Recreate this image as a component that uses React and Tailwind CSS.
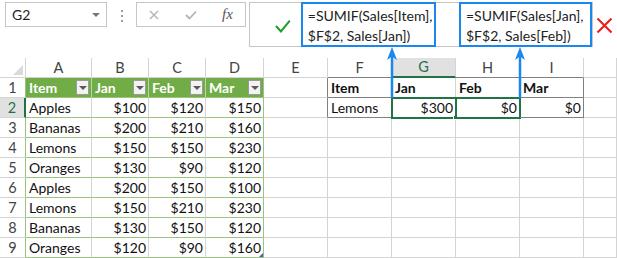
import React from "react";

const COLS = ["A", "B", "C", "D", "E", "F", "G", "H", "I", ""];

const DATA = [
  ["Apples", 100, 120, 150],
  ["Bananas", 200, 210, 160],
  ["Lemons", 150, 150, 230],
  ["Oranges", 130, 90, 120],
  ["Apples", 200, 150, 100],
  ["Lemons", 150, 210, 230],
  ["Bananas", 130, 150, 120],
  ["Oranges", 120, 90, 160],
];

const RIGHT = [
  ["Item", "Jan", "Feb", "Mar"],
  ["Lemons", "$300", "$0", "$0"],
];

function Arrow({ className }) {
  return (
    <svg className={className} width="12" height="51" viewBox="0 0 12 51">
      <line x1="6" y1="8" x2="6" y2="51" stroke="#1a86f0" strokeWidth="2.5" />
      <polygon points="6,0 11,13 6,9.5 1,13" fill="#1a86f0" />
    </svg>
  );
}

function FilterButton() {
  return (
    <div className="ml-auto mr-[2px] w-[13px] h-[15px] bg-[#f3f3f3] border border-[#9a9a9a] flex items-center justify-center">
      <div className="w-0 h-0 border-x-[4px] border-t-[4px] border-x-transparent border-t-[#5a5a5a]" />
    </div>
  );
}

function FormulaBar() {
  return (
    <div className="h-[58px] flex items-start pt-[2px]">
      {/* Name box */}
      <div className="ml-[5px] w-[102px] h-[25px] border border-[#c6c6c6] flex items-center pl-[6px] pr-[6px]">
        <span className="text-[14px] text-[#222]">G2</span>
        <div className="ml-auto w-0 h-0 border-x-[4px] border-t-[4px] border-x-transparent border-t-[#777]" />
      </div>

      {/* dots */}
      <div className="ml-[14px] mt-[8px] flex flex-col gap-[3px]">
        <div className="w-[2px] h-[2px] bg-[#9a9a9a]" />
        <div className="w-[2px] h-[2px] bg-[#9a9a9a]" />
        <div className="w-[2px] h-[2px] bg-[#9a9a9a]" />
      </div>

      {/* cancel / enter / fx */}
      <div className="ml-[13px] w-[110px] h-[25px] border border-[#c6c6c6] flex items-center">
        <svg className="ml-[12px]" width="10" height="10" viewBox="0 0 10 10">
          <path d="M1 1 L9 9 M9 1 L1 9" stroke="#b4b4b4" strokeWidth="1.4" />
        </svg>
        <svg className="ml-[26px]" width="12" height="10" viewBox="0 0 12 10">
          <path d="M1 5 L4.5 8.5 L11 1.5" stroke="#b4b4b4" strokeWidth="1.8" fill="none" />
        </svg>
        <span className="ml-[25px] text-[15px] italic text-[#555] font-['Liberation_Serif',serif] leading-none">
          fx
        </span>
      </div>

      {/* formula box with callouts */}
      <div className="ml-[3px] w-[344px] h-[45px] border border-[#c6c6c6] flex items-center">
        <svg className="ml-[25px] mt-[3px]" width="16" height="14" viewBox="0 0 16 14">
          <path d="M1 7 L6 12.5 L15 1.5" stroke="#1f9a2a" strokeWidth="2" fill="none" />
        </svg>
        <div className="ml-[10px] w-[137px] h-[45px] -my-px border-2 border-[#1a86f0] bg-white pl-[5px] pt-[2px] text-[14px] leading-[20px] text-[#222] whitespace-nowrap">
          <div>=SUMIF(Sales[Item],</div>
          <div>$F$2, Sales[Jan])</div>
        </div>
        <div className="ml-[23px] shrink-0 w-[133px] h-[45px] -my-px border-2 border-[#1a86f0] bg-white pl-[5px] pt-[2px] text-[14px] leading-[20px] text-[#222] whitespace-nowrap">
          <div>=SUMIF(Sales[Jan],</div>
          <div>$F$2, Sales[Feb])</div>
        </div>
      </div>

      <svg className="ml-[3px] mt-[15px] shrink-0" width="17" height="17" viewBox="0 0 17 17">
        <path d="M1.5 1.5 L15.5 15.5 M15.5 1.5 L1.5 15.5" stroke="#e8231f" strokeWidth="2.2" />
      </svg>
    </div>
  );
}

function Sheet() {
  const cells = [];

  // column header row
  cells.push(
    <div key="corner" className="border-r border-b border-r-[#d4d4d4] border-b-[#d4d4d4] flex items-end justify-end p-[2px]">
      <div className="w-0 h-0 border-b-[10px] border-l-[10px] border-b-[#dadada] border-l-transparent" />
    </div>
  );
  COLS.forEach((c, i) => {
    let cls = "border-r border-b border-r-[#d4d4d4] border-b-[#d4d4d4] text-[#444]";
    if (c === "G") cls = "border-r border-b-2 border-r-[#d4d4d4] border-b-[#217346] bg-[#e1e1e1] text-[#217346]";
    else if (c === "F" || c === "H" || c === "I") cls = "border-r border-b border-r-[#d4d4d4] border-b-[#808080] text-[#444]";
    cells.push(
      <div key={"h" + i} className={cls + " flex items-center justify-center text-[14.5px]"}>
        {c}
      </div>
    );
  });

  for (let r = 1; r <= 9; r++) {
    // row header
    cells.push(
      <div
        key={"r" + r}
        className={
          r === 2
            ? "border-r-2 border-b border-r-[#217346] border-b-[#d4d4d4] bg-[#e1e1e1] text-[#217346] flex items-center justify-center text-[14.5px]"
            : "border-r border-b border-r-[#9bc47f] border-b-[#d4d4d4] text-[#444] flex items-center justify-center text-[14.5px]"
        }
      >
        {r}
      </div>
    );

    for (let c = 0; c < 10; c++) {
      const key = r + "-" + c;
      // left table A:D
      if (c < 4) {
        const right = c === 3 ? "border-r-[#9bc47f]" : r === 1 ? "border-r-[#b9d6a4]" : "border-r-[#d4d4d4]";
        if (r === 1) {
          const label = ["Item", "Jan", "Feb", "Mar"][c];
          cells.push(
            <div key={key} className={"border-r border-b border-b-[#9bc47f] bg-[#70ad47] text-white font-bold flex items-center pl-[3px] text-[14px] " + right}>
              <span>{label}</span>
              <FilterButton />
            </div>
          );
        } else {
          const row = DATA[r - 2];
          const isLast = r === 9 && c === 3;
          cells.push(
            <div
              key={key}
              className={
                "relative border-r border-b border-b-[#9bc47f] flex items-center text-[14px] text-[#111] " +
                right +
                (c === 0 ? " pl-[3px]" : " justify-end pr-[2px]")
              }
            >
              {c === 0 ? row[0] : "$" + row[c]}
              {isLast && (
                <div className="absolute right-0 bottom-0 w-0 h-0 border-b-[4px] border-l-[4px] border-b-[#4a5ea8] border-l-transparent" />
              )}
            </div>
          );
        }
        continue;
      }

      // E column
      if (c === 4) {
        cells.push(
          <div
            key={key}
            className={
              r <= 2
                ? "border-r border-b border-r-[#808080] border-b-[#d4d4d4]"
                : "border-r border-b border-r-[#d4d4d4] border-b-[#d4d4d4]"
            }
          />
        );
        continue;
      }

      // right table F:I rows 1-2
      if (c >= 5 && c <= 8 && r <= 2) {
        const val = RIGHT[r - 1][c - 5];
        const right = c === 8 ? "border-r-[#808080]" : "border-r-[#d4d4d4]";
        const align = r === 1 ? " font-bold pl-[3px]" : c === 5 ? " pl-[3px]" : " justify-end pr-[2px]";
        cells.push(
          <div key={key} className={"relative border-r border-b border-b-[#808080] flex items-center text-[14px] text-[#111] " + right + align}>
            {val}
            {r === 2 && c === 6 && (
              <div className="absolute left-[-1px] top-[-1px] w-[66px] h-[22px] border-2 border-[#217346]">
                <div className="absolute right-[-3px] bottom-[-3px] w-[5px] h-[5px] bg-[#217346] border border-white" />
              </div>
            )}
            {r === 2 && c === 7 && (
              <div className="absolute left-[-1px] top-[-1px] w-[66px] h-[22px] border-2 border-[#217346]" />
            )}
          </div>
        );
        continue;
      }

      cells.push(<div key={key} className="border-r border-b border-r-[#d4d4d4] border-b-[#d4d4d4]" />);
    }
  }

  return (
    <div className="grid grid-cols-[26px_66px_57px_57px_58px_64px_64px_64px_64px_64px_33px] grid-rows-[repeat(10,20px)]">
      {cells}
    </div>
  );
}

export default function App() {
  return (
    <div className="relative w-[617px] h-[258px] bg-white overflow-hidden font-[Lato,'Liberation_Sans',sans-serif]">
      <FormulaBar />
      <Sheet />
      <Arrow className="absolute left-[386px] top-[47px]" />
      <Arrow className="absolute left-[514px] top-[47px]" />
    </div>
  );
}
